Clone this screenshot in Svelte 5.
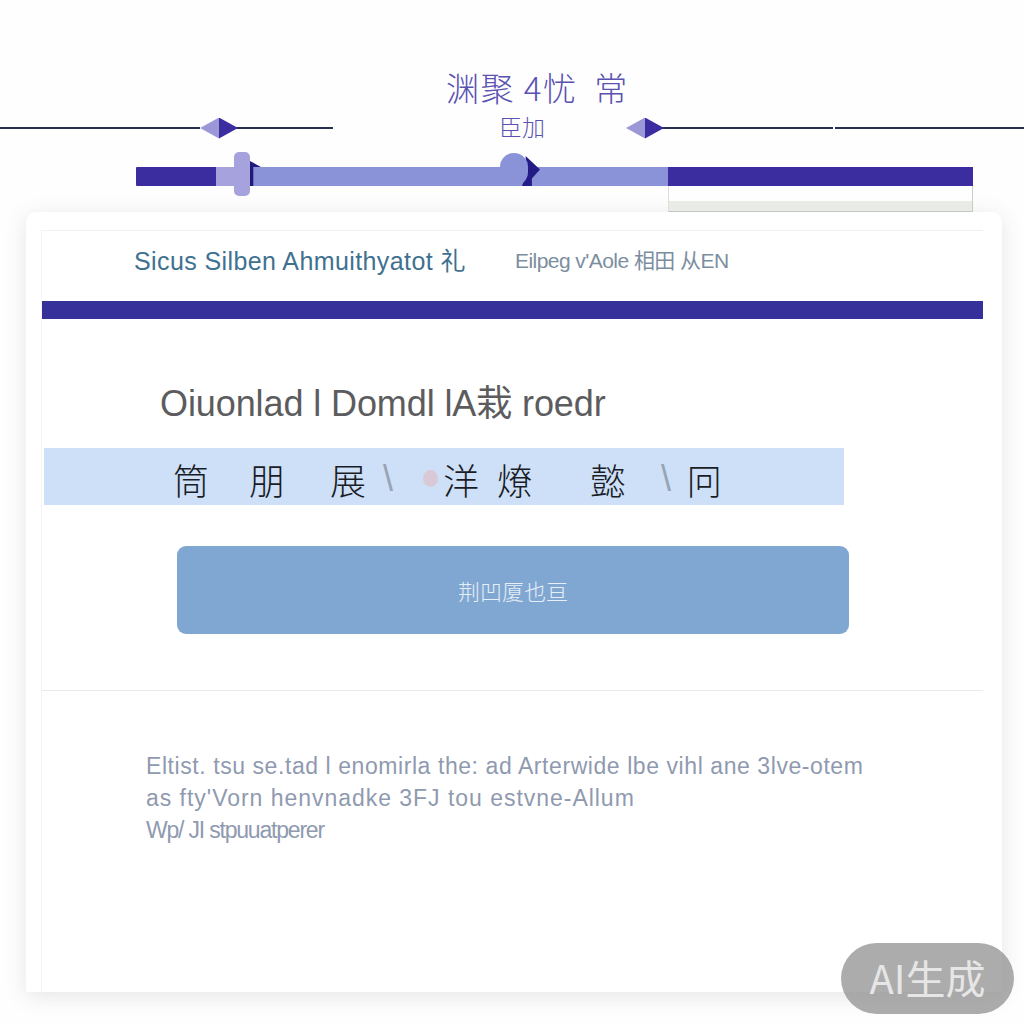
<script lang="ts">
  const BAND = [
    { text: "筒", gap: 40 },
    { text: "朋", gap: 45 },
    { text: "展", gap: 17 },
    { text: "\\", gap: 30, soft: true },
    { text: "", gap: 5, dot: true },
    { text: "洋", gap: 18 },
    { text: "燎", gap: 57 },
    { text: "懿", gap: 35 },
    { text: "\\", gap: 15, soft: true },
    { text: "冋", gap: 0 },
  ];

  const NOTES = [
    { text: "Eltist. tsu se.tad l enomirla the: ad Arterwide lbe vihl ane 3lve-otem", spacing: 0.57 },
    { text: "as fty'Vorn henvnadke 3FJ tou estvne-Allum", spacing: 0.97 },
    { text: "Wp/ JI stpuuatperer", spacing: -1.2 },
  ];
</script>

<main class="page">
  <header class="hero">
    <h1 class="title">渊聚 4忧 <span class="title-end">常</span></h1>
    <div class="rail">
      <div class="rail-side left">
        <span class="line w200"></span>
        <span class="diamond"></span>
        <span class="line grow"></span>
      </div>
      <div class="rail-label">臣加</div>
      <div class="rail-side right">
        <span class="diamond"></span>
        <span class="line w171"></span>
        <span class="line grow"></span>
      </div>
    </div>

    <div class="track">
      <div class="seg dark start"></div>
      <div class="seg pale">
        <span class="knob"></span>
        <span class="knob-tip"></span>
      </div>
      <div class="seg mid">
        <span class="blob-tip"></span>
        <span class="blob"></span>
      </div>
      <div class="seg-end">
        <div class="seg dark"></div>
        <div class="tray"><span class="tray-foot"></span></div>
      </div>
    </div>
  </header>

  <section class="card">
    <div class="inner">
      <nav class="nav">
        <span class="nav-main">Sicus Silben Ahmuithyatot 礼</span>
        <span class="nav-sub">Eilpeg v'Aole 相田 从EN</span>
      </nav>
      <div class="rule"></div>

      <div class="body">
        <h2 class="heading">Oiuonlad l Domdl lA栽 roedr</h2>
        <div class="band">
          {#each BAND as item}
            {#if item.dot}
              <span class="dot" style="margin-right:{item.gap}px"></span>
            {:else}
              <span class:soft={item.soft} style="margin-right:{item.gap}px">{item.text}</span>
            {/if}
          {/each}
        </div>
        <button class="action">荆凹厦也亘</button>
      </div>

      <div class="notes">
        {#each NOTES as note}
          <p style="letter-spacing:{note.spacing}px">{note.text}</p>
        {/each}
      </div>
    </div>
  </section>

  <div class="badge">AI生成</div>
</main>

<style>
  :global(body) {
    margin: 0;
    background: #fff;
  }

  .page {
    position: relative;
    width: 1024px;
    height: 1024px;
    overflow: hidden;
    background: #fefefe;
    font-family: "Liberation Sans", "Noto Sans CJK SC", sans-serif;
  }

  .hero {
    height: 212px;
    box-sizing: border-box;
    padding-top: 68px;
  }

  .title {
    margin: 0 0 0 446px;
    height: 38px;
    font-family: "Noto Sans CJK SC", sans-serif;
    font-size: 33px;
    line-height: 38px;
    font-weight: 300;
    letter-spacing: 1.5px;
    color: #5a52b2;
    white-space: nowrap;
  }
  .title-end {
    margin-left: 8px;
  }

  .rail {
    display: flex;
    align-items: center;
    height: 44px;
  }
  .rail-side {
    display: flex;
    align-items: center;
  }
  .rail-side.left {
    width: 333px;
  }
  .rail-side.right {
    width: 398px;
  }
  .rail-label {
    flex: 1;
    padding: 0 0 4px 166px;
    font-family: "Noto Sans CJK SC", sans-serif;
    font-size: 23px;
    line-height: 30px;
    font-weight: 300;
    color: #5a52b2;
  }

  .line {
    height: 2px;
    background: #27314f;
  }
  .line.w200 {
    width: 200px;
  }
  .line.w171 {
    width: 171px;
    margin-right: 2px;
  }
  .line.grow {
    flex: 1;
  }
  .diamond {
    position: relative;
    width: 38px;
    height: 21px;
    margin-right: -2px;
    flex: none;
    clip-path: polygon(0 50%, 50% 0, 100% 50%, 50% 100%);
    background: linear-gradient(90deg, #9c98d8 50%, #3b2da0 50%);
  }

  .track {
    display: flex;
    margin: 17px 51px 0 136px;
    height: 19px;
  }
  .seg {
    height: 19px;
    position: relative;
  }
  .seg.dark {
    background: #3b2da0;
  }
  .seg.start {
    width: 80px;
    border-radius: 1px 0 0 1px;
  }
  .seg.pale {
    z-index: 2;
    width: 34px;
    background: #a6a2dd;
  }
  .seg.mid {
    width: 418px;
    background: #8a93d8;
  }
  .seg-end {
    flex: 1;
  }

  .knob {
    position: absolute;
    left: 18px;
    top: -15px;
    width: 16px;
    height: 44px;
    border-radius: 5px;
    background: #a6a2dd;
  }
  .knob-tip {
    position: absolute;
    left: 34px;
    top: -6px;
    width: 11px;
    height: 25px;
    background: #1f1a7e;
    clip-path: polygon(0 0, 100% 24%, 30% 24%, 30% 100%, 0 100%);
  }
  .blob {
    position: absolute;
    left: 250px;
    top: -14px;
    width: 28px;
    height: 33px;
    border-radius: 14px 14px 14px 10px;
    background: #8a93d8;
  }
  .blob-tip {
    position: absolute;
    left: 272px;
    top: -11px;
    width: 18px;
    height: 30px;
    background: #231c86;
    clip-path: polygon(20% 0, 100% 45%, 55% 75%, 55% 100%, 0 100%, 25% 60%);
  }

  .tray {
    position: relative;
    height: 26px;
    box-sizing: border-box;
    background: #fdfefd;
    border-right: 1px solid #c9ccc8;
    border-bottom: 1px solid #c4c7c3;
    border-left: 1px solid #dcdedb;
  }
  .tray-foot {
    position: absolute;
    left: 0;
    right: 0;
    bottom: 0;
    height: 10px;
    background: #e8ebe6;
  }

  .card {
    margin: 0 22px 0 26px;
    height: 780px;
    box-sizing: border-box;
    padding: 18px 19px 0 15px;
    background: #fff;
    border-radius: 10px 10px 0 0;
    box-shadow: 0 4px 22px rgba(60, 60, 70, 0.13);
  }
  .inner {
    height: 100%;
    border-top: 1px solid #f1f1f1;
    border-left: 1px solid #f4f4f4;
  }

  .nav {
    display: flex;
    align-items: center;
    height: 56px;
    padding: 0 0 14px 92px;
    white-space: nowrap;
  }
  .nav-main {
    width: 381px;
    font-size: 25px;
    letter-spacing: 0.4px;
    color: #3f7190;
  }
  .nav-sub {
    font-size: 21px;
    letter-spacing: -0.55px;
    color: #7b8ea0;
  }
  .rule {
    height: 18px;
    background: #36309a;
  }

  .body {
    height: 372px;
    box-sizing: border-box;
    padding-top: 62px;
    border-bottom: 1px solid #e9e9ee;
  }
  .heading {
    margin: 0 0 22px 118px;
    height: 45px;
    font-size: 36px;
    line-height: 45px;
    font-weight: 400;
    letter-spacing: -0.1px;
    color: #5c5c5e;
    white-space: nowrap;
  }
  .band {
    display: flex;
    align-items: center;
    box-sizing: border-box;
    width: 800px;
    height: 57px;
    margin-left: 2px;
    padding: 4px 0 0 129px;
    background: #cde0f7;
    font-family: "Noto Sans CJK SC", sans-serif;
    font-size: 36px;
    font-weight: 300;
    color: #1a1c26;
    white-space: nowrap;
  }
  .soft {
    color: #98a4b4;
    font-family: "Liberation Sans", sans-serif;
    font-weight: 400;
  }
  .dot {
    width: 15px;
    height: 17px;
    border-radius: 50%;
    background: #d9c9d6;
  }
  .action {
    display: block;
    width: 672px;
    height: 88px;
    margin: 41px 0 0 135px;
    border: none;
    border-radius: 9px;
    background: #80a7d1;
    color: #e6eef8;
    font-family: "Noto Sans CJK SC", sans-serif;
    font-size: 22px;
    font-weight: 300;
  }

  .notes {
    padding: 59px 0 0 104px;
    color: #8f9ab0;
    font-size: 23px;
    line-height: 32px;
  }
  .notes p {
    margin: 0;
    white-space: nowrap;
  }

  .badge {
    position: absolute;
    left: 841px;
    top: 943px;
    width: 173px;
    height: 71px;
    border-radius: 36px;
    background: rgba(140, 140, 140, 0.72);
    color: #e6e6e6;
    font-family: "Noto Sans CJK SC", sans-serif;
    font-size: 40px;
    line-height: 69px;
    text-align: center;
  }
</style>
